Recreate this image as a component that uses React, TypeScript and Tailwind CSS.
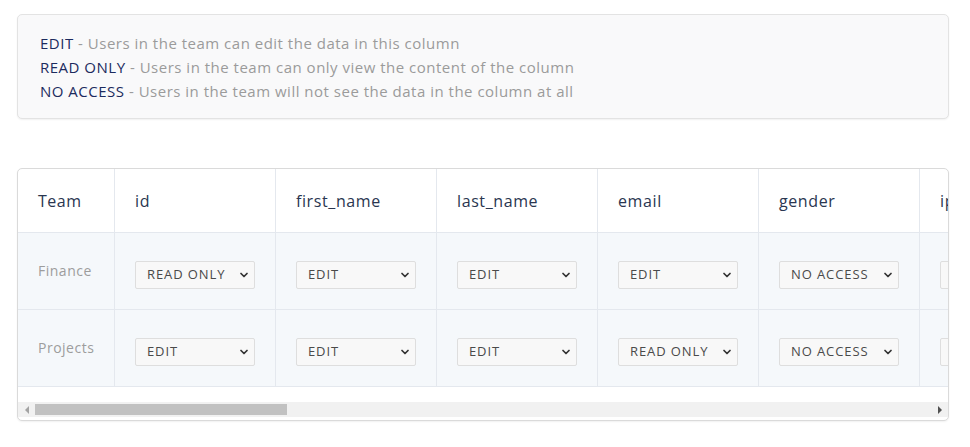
import { ChevronDown } from "lucide-react";

const COLS = ["id", "first_name", "last_name", "email", "gender", "ip_address"];

const ROWS: { team: string; access: string[] }[] = [
  { team: "Finance", access: ["READ ONLY", "EDIT", "EDIT", "EDIT", "NO ACCESS", "EDIT"] },
  { team: "Projects", access: ["EDIT", "EDIT", "EDIT", "READ ONLY", "NO ACCESS", "EDIT"] },
];

const LEGEND = [
  { k: "EDIT", d: "Users in the team can edit the data in this column" },
  { k: "READ ONLY", d: "Users in the team can only view the content of the column" },
  { k: "NO ACCESS", d: "Users in the team will not see the data in the column at all" },
];

function AccessSelect({ value }: { value: string }) {
  return (
    <div className="relative w-[120px] h-[28px]">
      <select
        defaultValue={value}
        className="appearance-none w-full h-full border border-[#dedede] bg-[#f8f8f8] rounded-[2px] pl-[11px] text-[13px] text-[#4a4a4a] tracking-[0.9px] outline-none"
      >
        <option>EDIT</option>
        <option>READ ONLY</option>
        <option>NO ACCESS</option>
      </select>
      <ChevronDown size={12} strokeWidth={3.5} className="absolute right-[5px] top-[8px] text-[#333] pointer-events-none" />
    </div>
  );
}

export default function App() {
  return (
    <div className="w-[970px] h-[447px] bg-white font-['Open_Sans',sans-serif] pt-[14px] pl-[17px]">
      <div className="w-[932px] h-[105px] bg-[#f9f9fa] border border-[#e3e3e3] rounded-[5px] shadow-[0_1px_2px_rgba(0,0,0,0.06)] pl-[22px] pt-[16px]">
        {LEGEND.map(l => (
          <p key={l.k} className="text-[15px] leading-[24px] text-[#9b9b9b] tracking-[0.5px]">
            <span className="text-[#1c2b5e]">{l.k}</span> - {l.d}
          </p>
        ))}
      </div>

      <div className="mt-[49px] w-[932px] h-[253px] border border-[#dadada] rounded-[5px] overflow-hidden shadow-[0_1px_2px_rgba(0,0,0,0.06)] bg-white">
        <div className="w-[930px] overflow-hidden">
          <div className="flex h-[64px] border-b border-[#e4e8ee]">
            <div className="w-[97px] shrink-0 border-r border-[#e4e8ee] pl-[20px] flex items-center text-[16px] text-[#2a3650] tracking-[0.5px]">Team</div>
            {COLS.map(c => (
              <div key={c} className="w-[161px] shrink-0 border-r border-[#e4e8ee] pl-[20px] flex items-center text-[16px] text-[#2a3650] tracking-[0.6px] whitespace-nowrap">{c}</div>
            ))}
          </div>
          {ROWS.map(r => (
            <div key={r.team} className="flex h-[77px] bg-[#f5f8fb] border-b border-[#e4e8ee]">
              <div className="w-[97px] shrink-0 border-r border-[#e4e8ee] pl-[20px] pt-[28px] text-[14px] leading-[20px] text-[#9d9d9d] tracking-[0.5px]">{r.team}</div>
              {r.access.map((a, i) => (
                <div key={i} className="w-[161px] shrink-0 border-r border-[#e4e8ee] pl-[20px] pt-[28px]">
                  <AccessSelect value={a} />
                </div>
              ))}
            </div>
          ))}
        </div>
        <div className="h-[15px] mt-[15px] bg-[#f1f1f1] flex items-center">
          <div className="w-[17px] flex justify-center">
            <div className="w-0 h-0 border-y-[4px] border-y-transparent border-r-[4px] border-r-[#a3a3a3]" />
          </div>
          <div className="w-[252px] h-[11px] bg-[#c1c1c1]" />
          <div className="flex-1" />
          <div className="w-[17px] flex justify-center">
            <div className="w-0 h-0 border-y-[4px] border-y-transparent border-l-[4px] border-l-[#505050]" />
          </div>
        </div>
      </div>
    </div>
  );
}
